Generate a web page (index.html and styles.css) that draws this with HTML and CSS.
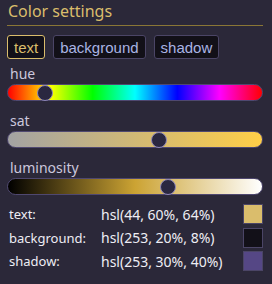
FILE: index.html
```html
<!DOCTYPE html>
<html lang="en">
<head>
  <meta charset="UTF-8" />
  <title>Color settings</title>
  <link rel="stylesheet" href="styles.css">
</head>
<body>

  <div class="panel">
    <h2 class="panel-title">Color settings</h2>

    <!-- which color is being edited -->
    <div class="targets">
      <button class="target active">text</button>
      <button class="target">background</button>
      <button class="target">shadow</button>
    </div>

    <label class="slider-label" for="hue">hue</label>
    <input class="slider hue" type="range" id="hue" min="0" max="360" value="44">

    <label class="slider-label" for="sat">sat</label>
    <input class="slider sat" type="range" id="sat" min="0" max="100" value="60">

    <label class="slider-label" for="lum">luminosity</label>
    <input class="slider lum" type="range" id="lum" min="0" max="100" value="64">

    <!-- resulting values -->
    <div class="values">
      <span class="name">text:</span>
      <span class="code">hsl(44, 60%, 64%)</span>
      <span class="swatch" style="background: hsl(44, 60%, 64%)"></span>

      <span class="name">background:</span>
      <span class="code">hsl(253, 20%, 8%)</span>
      <span class="swatch" style="background: hsl(253, 20%, 8%)"></span>

      <span class="name">shadow:</span>
      <span class="code">hsl(253, 30%, 40%)</span>
      <span class="swatch" style="background: hsl(253, 30%, 40%)"></span>
    </div>
  </div>

</body>
</html>
```

FILE: styles.css
```css
body {
  margin: 0;
  padding: 0;
  font-family: 'Noto Sans', sans-serif;
  background: #2b2839;
  color: #e6e4ee;
}

.panel {
  width: 256px;
  padding: 0 9px 0 7px;
}

.panel-title {
  margin: 0;
  padding: 0 0 0 1px;
  height: 25px;
  line-height: 22px;
  font-size: 16px;
  font-weight: normal;
  color: hsl(44, 60%, 64%);
  border-bottom: 1px solid #8a7636;
}

/* Botones */
.targets {
  display: flex;
  gap: 8px;
  margin-top: 9px;
  margin-bottom: 4px;
}

.target {
  font-family: 'Liberation Sans', Arial, sans-serif;
  font-size: 15px;
  height: 24px;
  padding: 0 6px;
  background: hsl(253, 20%, 8%);
  color: #aab4e4;
  border: 1px solid #4b4566;
  border-radius: 3px;
}

.target.active {
  color: hsl(44, 60%, 64%);
  border-color: hsl(44, 60%, 64%);
}

/* Sliders */
.slider-label {
  display: block;
  margin: 0 0 0 3px;
  height: 21px;
  line-height: 21px;
  font-size: 14px;
  color: #cbc7dc;
}

.slider {
  -webkit-appearance: none;
  appearance: none;
  display: block;
  box-sizing: border-box;
  width: 256px;
  height: 17px;
  margin: 0 0 9px 0;
  border: 1px solid #4f4870;
  border-radius: 9px;
}

.slider::-webkit-slider-thumb {
  -webkit-appearance: none;
  box-sizing: border-box;
  width: 16px;
  height: 16px;
  border-radius: 50%;
  background: #2a2740;
  border: 1px solid #8e86b8;
}

.hue {
  background: linear-gradient(to right,
    hsl(0, 100%, 50%), hsl(60, 100%, 50%), hsl(120, 100%, 50%),
    hsl(180, 100%, 50%), hsl(240, 100%, 50%), hsl(300, 100%, 50%),
    hsl(360, 100%, 50%));
}

.sat {
  background: linear-gradient(to right, hsl(44, 0%, 64%), hsl(44, 100%, 64%));
}

.lum {
  background: linear-gradient(to right, hsl(44, 60%, 0%), hsl(44, 60%, 50%), hsl(44, 60%, 100%));
}

/* Valores */
.values {
  display: grid;
  grid-template-columns: 92px 1fr 20px;
  grid-auto-rows: 20px;
  row-gap: 3.5px;
  align-items: center;
  margin-top: 1px;
  padding-left: 2px;
  font-size: 13px;
  color: #eeedf4;
}

.code {
  font-size: 14px;
}

.swatch {
  box-sizing: border-box;
  width: 20px;
  height: 20px;
  border: 1px solid #4b4566;
}
```
